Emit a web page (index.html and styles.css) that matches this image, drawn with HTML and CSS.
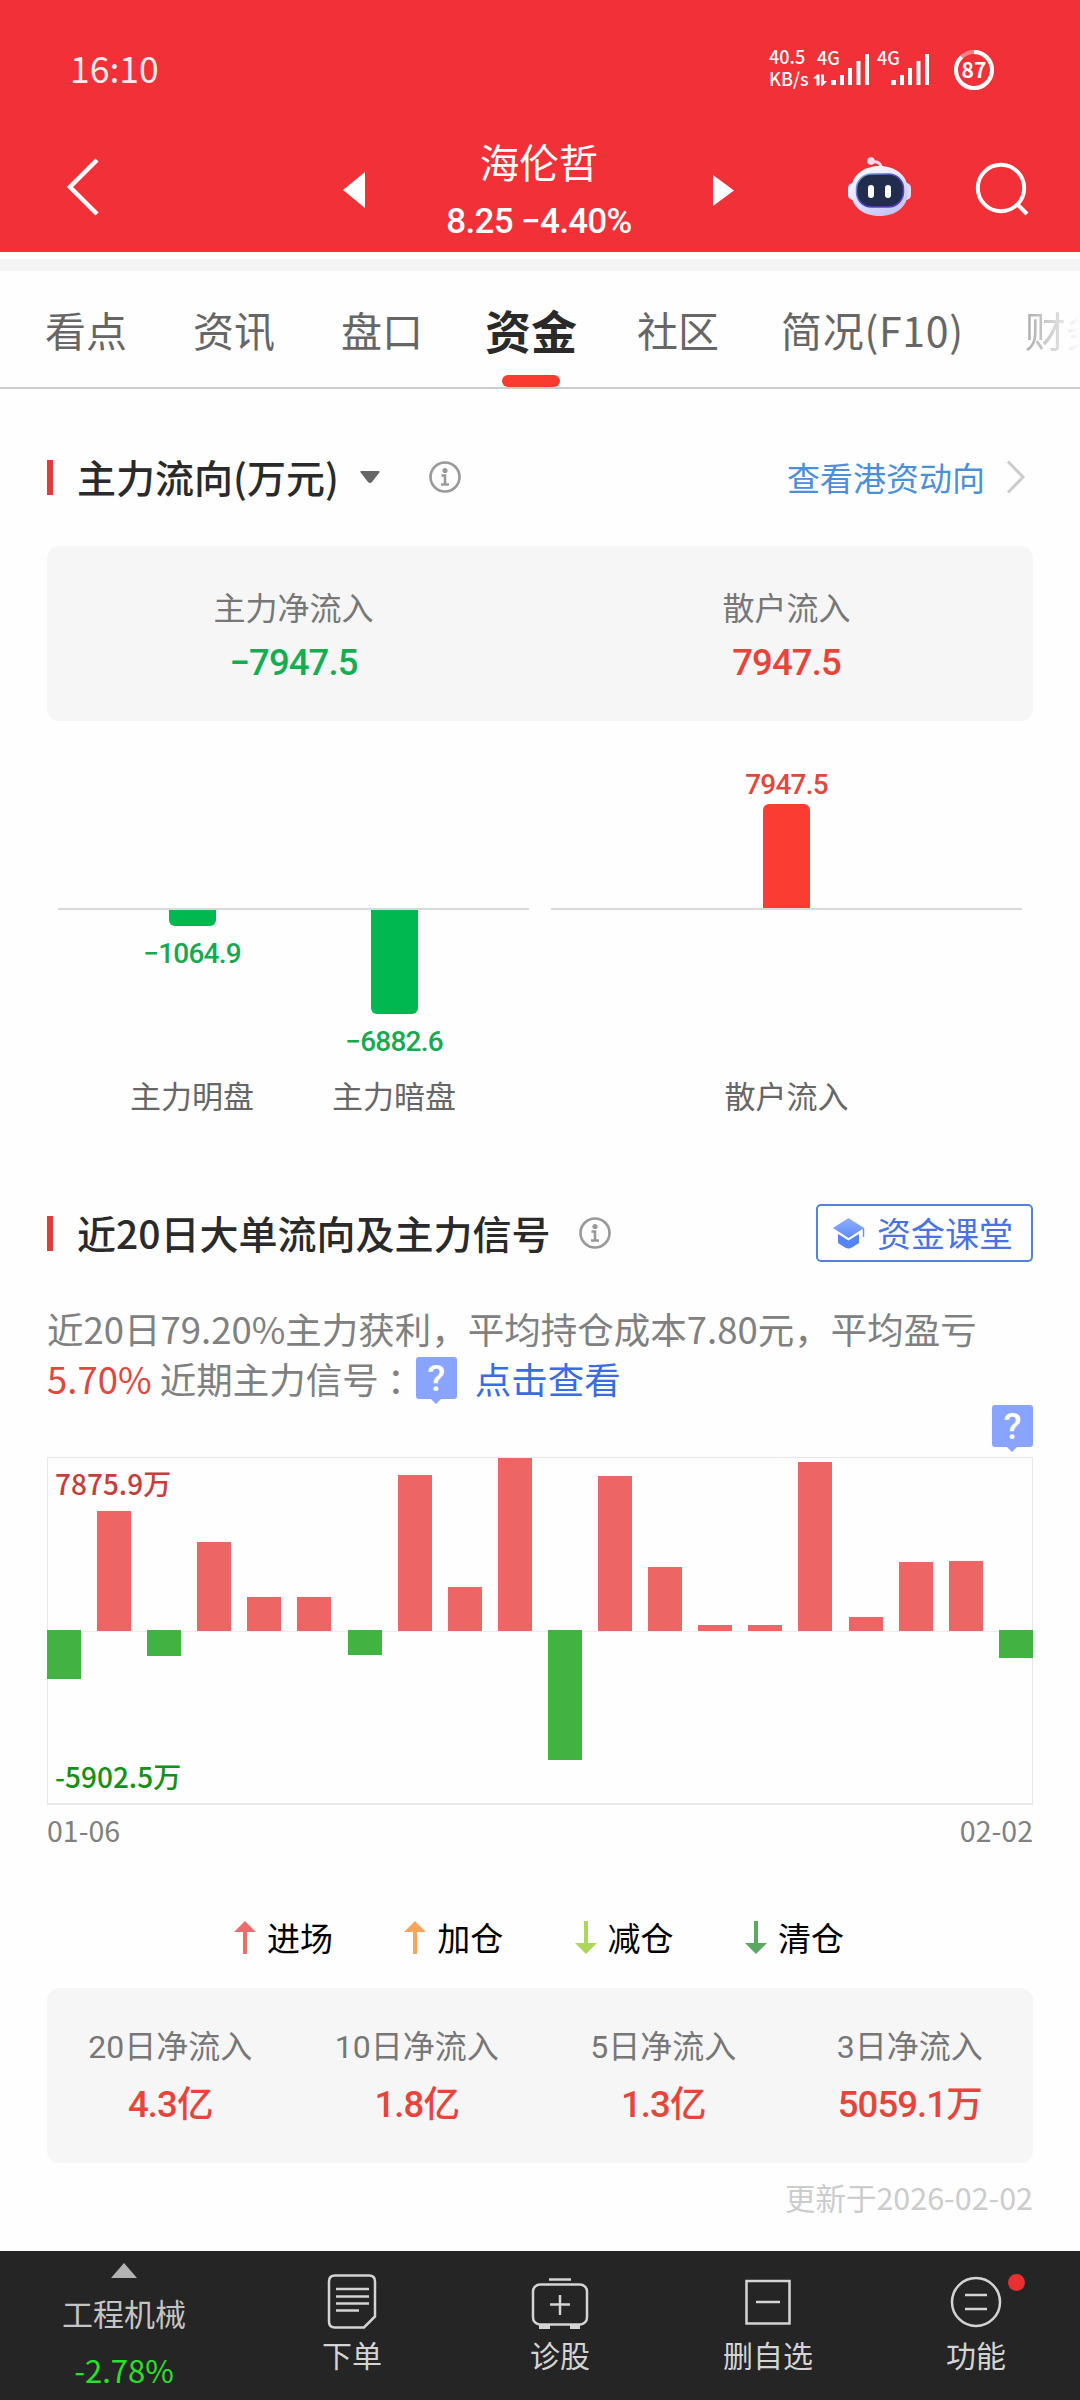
FILE: index.html
```
<!DOCTYPE html>
<html lang="zh-CN">
<head>
  <meta charset="UTF-8" />
  <meta name="viewport" content="width=device-width, initial-scale=1" />
  <title>海伦哲 - 资金</title>
  <link rel="stylesheet" href="styles.css">
</head>
<body>
  <header>
    <div class="status">
      <span class="time">16:10</span>
      <div class="status-right">
        <div class="speed"><span>40.5</span><span>KB/s</span></div>
        <svg class="signal" width="117" height="44" viewBox="0 0 117 44">
          <path d="M0 30.500 4 26.500h2.500v11H3.500v-7zM8 26.500h3v6.500h3l-4.500 5H8z" />
          <path d="M18 32h5v5h-5zM27 27h4v10h-4zM35 20h4v17h-4zM43.500 13h4v24h-4zM52 6h4v31h-4z" />
          <path d="M78 32h5v5h-5zM87 27h4v10h-4zM95 20h4v17h-4zM103.500 13h4v24h-4zM112 6h4v31h-4z" />
          <text x="4" y="17">4G</text>
          <text x="64" y="17">4G</text>
        </svg>
        <svg width="40" height="40" viewBox="0 0 40 40">
          <circle cx="20" cy="20" r="18" fill="none" stroke="#fff" stroke-opacity=".4" stroke-width="4" />
          <circle cx="20" cy="20" r="18" fill="none" stroke="#fff" stroke-width="4" pathLength="100" stroke-dasharray="88 12" transform="rotate(-90 20 20)" />
          <text class="battery" x="20" y="27.500">87</text>
        </svg>
      </div>
    </div>
    <div class="nav">
      <svg class="back" width="36" height="60" viewBox="0 0 36 60"><path d="M32 3 5 30l27 27" fill="none" stroke="#fff" stroke-width="4.500" /></svg>
      <div class="stock">
        <svg width="22" height="36" viewBox="0 0 22 36"><path d="M22 0v36L0 18z" fill="#fff" /></svg>
        <div class="stock-name">
          <h1>海伦哲</h1>
          <p>8.25 −4.40%</p>
        </div>
        <svg width="21" height="31" viewBox="0 0 21 31"><path d="M0 0v31l21-15.500z" fill="#fff" /></svg>
      </div>
      <svg class="robot" width="64" height="60" viewBox="0 0 64 60">
        <defs>
          <linearGradient id="head" x1="0" y1="0" x2=".6" y2="1">
            <stop offset="0" stop-color="#fff" />
            <stop offset=".5" stop-color="#e9e6fb" />
            <stop offset="1" stop-color="#c4c6f8" />
          </linearGradient>
          <linearGradient id="rim" x1="0" y1="0" x2="1" y2="1">
            <stop offset="0" stop-color="#7fb9d8" />
            <stop offset=".5" stop-color="#4a43c8" />
            <stop offset="1" stop-color="#6f35d8" />
          </linearGradient>
        </defs>
        <path d="M33 11c0-5-4-7-9-6" fill="none" stroke="#f5d8ea" stroke-width="3" />
        <circle cx="23" cy="4" r="3.800" fill="#f8dcec" />
        <rect x="0" y="26" width="12" height="17" rx="5" fill="#eeeafd" />
        <rect x="51" y="26" width="12" height="17" rx="5" fill="#dedafb" />
        <path d="M31.500 9C47 9 60 18 60 34S48 59 31.500 59 3 50 3 34 16 9 31.500 9z" fill="url(#head)" />
        <rect x="8.500" y="17" width="47" height="33" rx="15" fill="#222c4d" stroke="url(#rim)" stroke-width="1.500" />
        <rect x="20" y="28" width="6" height="13" rx="3" fill="#fff" />
        <rect x="37" y="28" width="6" height="13" rx="3" fill="#fff" />
      </svg>
      <svg class="search" width="54" height="54" viewBox="0 0 54 54" fill="none" stroke="#fff" stroke-width="4">
        <circle cx="26" cy="26" r="23.200" />
        <path d="m43 43 9 9" />
      </svg>
    </div>
  </header>

  <nav class="tabs">
    <a>看点</a>
    <a>资讯</a>
    <a>盘口</a>
    <a class="active">资金</a>
    <a>社区</a>
    <a class="wide">简况(F10)</a>
    <a class="fade">财务</a>
  </nav>

  <main>
    <section class="flow">
      <div class="section-head">
        <h2>主力流向(万元)</h2>
        <svg class="caret" width="20" height="12" viewBox="0 0 20 12"><path d="M2 0h16q3 0 1 2l-7 9q-2 2-4 0L1 2q-2-2 1-2z" fill="#666" /></svg>
        <svg class="info" width="32" height="32" viewBox="0 0 32 32"><use href="#i-info" /></svg>
        <a class="more">查看港资动向</a>
        <svg width="20" height="34" viewBox="0 0 20 34"><path d="M2 1.500 17 17 2 32.500" fill="none" stroke="#ccc" stroke-width="3" /></svg>
      </div>

      <div class="card two">
        <div><span>主力净流入</span><b class="green">−7947.5</b></div>
        <div><span>散户流入</span><b class="red">7947.5</b></div>
      </div>

      <div class="flow-chart">
        <div class="pane">
          <div class="col">
            <div class="above"></div>
            <div class="below"><i style="height: 16px"></i><em>−1064.9</em></div>
            <span>主力明盘</span>
          </div>
          <div class="col">
            <div class="above"></div>
            <div class="below"><i style="height: 104px"></i><em>−6882.6</em></div>
            <span>主力暗盘</span>
          </div>
        </div>
        <div class="pane">
          <div class="col">
            <div class="above"><em>7947.5</em><i style="height: 104px"></i></div>
            <div class="below"></div>
            <span>散户流入</span>
          </div>
        </div>
      </div>
    </section>

    <section class="signal-section">
      <div class="section-head">
        <h2>近20日大单流向及主力信号</h2>
        <svg class="info" width="32" height="32" viewBox="0 0 32 32"><use href="#i-info" /></svg>
        <a class="class-btn">
          <svg width="34" height="31" viewBox="0 0 34 31">
            <defs><linearGradient id="cap" x1="0" y1="0" x2="0" y2="1"><stop offset="0" stop-color="#8fb0ff" /><stop offset="1" stop-color="#5f8af5" /></linearGradient></defs>
            <path d="M15.500 0 31 10 15.500 20 0 10z" fill="url(#cap)" />
            <path d="M5 16 15.500 22.500 26 16v9l-7 4.500q-3.500 2-7 0L5 25z" fill="#5585f5" />
            <path d="M30.500 10v9" stroke="#6f97f8" stroke-width="1.500" />
          </svg>
          资金课堂
        </a>
      </div>

      <p class="summary">近20日79.20%主力获利，平均持仓成本7.80元，平均盈亏<br><strong>5.70%</strong> 近期主力信号<i class="colon">：</i><span class="badge">?</span><a>点击查看</a></p>

      <div class="badge-row"><span class="badge">?</span></div>

      <div class="bar-chart" id="barChart">
        <label class="max">7875.9万</label>
        <label class="min">-5902.5万</label>
      </div>
      <div class="dates"><span>01-06</span><span>02-02</span></div>

      <div class="legend">
        <span><svg width="22" height="33" viewBox="0 0 22 33" fill="#ee6b6b"><use href="#i-up" /></svg>进场</span>
        <span><svg width="22" height="33" viewBox="0 0 22 33" fill="#f8a55c"><use href="#i-up" /></svg>加仓</span>
        <span><svg width="22" height="33" viewBox="0 0 22 33" fill="#aed65a"><use href="#i-down" /></svg>减仓</span>
        <span><svg width="22" height="33" viewBox="0 0 22 33" fill="#5ba863"><use href="#i-down" /></svg>清仓</span>
      </div>

      <div class="card four">
        <div><span>20日净流入</span><b class="red">4.3亿</b></div>
        <div><span>10日净流入</span><b class="red">1.8亿</b></div>
        <div><span>5日净流入</span><b class="red">1.3亿</b></div>
        <div><span>3日净流入</span><b class="red">5059.1万</b></div>
      </div>
      <p class="updated">更新于2026-02-02</p>
    </section>
  </main>

  <footer>
    <div class="sector">
      <svg width="26" height="15" viewBox="0 0 26 15"><path d="M13 0l13 15H0z" fill="#b3b3b3" /></svg>
      <span>工程机械</span>
      <b>-2.78%</b>
    </div>
    <a>
      <svg width="58" height="58" viewBox="0 0 58 58">
        <path d="M12 4.500h34q6 0 6 6v35L41 56.500H12q-6 0-6-6v-40q0-6 6-6z" />
        <path d="M13 18h33M13 25.500h33M13 32.500h33M13 39.500h23" />
      </svg>
      下单
    </a>
    <a>
      <svg width="58" height="58" viewBox="0 0 58 58">
        <rect x="2" y="13.500" width="54" height="40" rx="7" />
        <path d="M18 8.500h22M29 24v20M19 33.500h20" />
        <path d="M8 56h11M39 56h10" stroke-width="4" />
      </svg>
      诊股
    </a>
    <a>
      <svg width="58" height="58" viewBox="0 0 58 58">
        <rect x="7.500" y="10" width="43" height="42.500" />
        <path d="M17 31h24" />
      </svg>
      删自选
    </a>
    <a class="has-dot">
      <svg width="58" height="58" viewBox="0 0 58 58">
        <circle cx="29" cy="31" r="24" />
        <path d="M18 24h22M18 38h22" />
      </svg>
      功能
    </a>
  </footer>

  <!-- shared icons -->
  <svg class="sprite">
    <symbol id="i-info" viewBox="0 0 32 32">
      <circle cx="16" cy="16" r="14.500" fill="none" stroke="#999" stroke-width="2.600" />
      <circle cx="16" cy="9.500" r="2.600" fill="#999" />
      <path d="M12.500 14.500H16V23M12 23.500h8" fill="none" stroke="#999" stroke-width="2.600" />
    </symbol>
    <symbol id="i-up" viewBox="0 0 22 33"><path d="M11 0l11 11h-9v22H9V11H0z" /></symbol>
    <symbol id="i-down" viewBox="0 0 22 33"><path d="M11 33L0 22h9V0h4v22h9z" /></symbol>
  </svg>

  <script>
    // daily net flow, pixels above / below the zero line
    const flows = [-49.3, 120, -26.3, 89.5, 34.5, 34, -24.7, 156, 44.3, 173.3, -130.3, 155, 64.3, 6.3, 5.7, 169, 13.7, 69, 70.3, -28];
    const chart = document.getElementById('barChart');

    flows.forEach(v => {
      const day = document.createElement('div');
      day.className = v > 0 ? 'day up' : 'day down';
      const bar = document.createElement('i');
      bar.style.height = Math.abs(v) + 'px';
      day.appendChild(bar);
      chart.appendChild(day);
    });
  </script>
</body>
</html>
```
FILE: styles.css
```
* {
  margin: 0;
  padding: 0;
  box-sizing: border-box;
}
body {
  width: 1080px;
  height: 2400px;
  overflow: hidden;
  background: #fefefe;
  color: #666;
  font-family: "Noto Sans CJK SC", sans-serif;
  display: flex;
  flex-direction: column;
}
svg {
  display: block;
  flex: none;
}
i, em {
  font-style: normal;
}
.sprite {
  position: absolute;
  width: 0;
  height: 0;
}
.red { color: #e8443a; }
.green { color: #14ad52; }

/* header */
header {
  height: 252px;
  background: #f13038;
  color: #fff;
}
.status {
  height: 140px;
  padding: 0 86px 0 70px;
  display: flex;
  align-items: center;
  justify-content: space-between;
}
.time {
  margin-top: -4px;
  font-size: 35.500px;
  line-height: 40px;
  color: #ffe9e9;
}
.status-right {
  display: flex;
  align-items: center;
}
.speed {
  width: 44px;
  margin-top: -7px;
  display: flex;
  flex-direction: column;
  font-size: 18px;
  font-weight: 500;
  line-height: 22px;
}
.signal {
  margin-right: 24px;
  fill: #fff;
  overflow: visible;
}
.signal text {
  font-size: 18px;
  font-weight: 500;
}
.battery {
  fill: #fff;
  font-size: 21px;
  font-weight: 700;
  text-anchor: middle;
}
.nav {
  height: 112px;
  padding: 0 52px 0 65px;
  display: flex;
  align-items: flex-start;
}
.back {
  margin-top: 17px;
}
.stock {
  width: 391px;
  margin-left: 242px;
  display: flex;
  align-items: center;
  justify-content: space-between;
}
.stock-name {
  margin-top: -3px;
  text-align: center;
}
.stock svg {
  margin-top: -5px;
}
.stock h1 {
  font-size: 39.500px;
  font-weight: 400;
  line-height: 48px;
}
.stock p {
  margin-top: 14px;
  font-family: Roboto, sans-serif;
  font-size: 35px;
  font-weight: 500;
  line-height: 46px;
  letter-spacing: -.7px;
}
.robot {
  margin: 17px 0 0 114px;
}
.search {
  margin: 22px -1px 0 auto;
}

/* tabs */
.tabs {
  height: 130px;
  margin-top: 7px;
  padding-left: 45px;
  border-top: 12px solid #f4f4f4;
  border-bottom: 2px solid #ccc;
  display: flex;
  overflow: hidden;
  white-space: nowrap;
}
.tabs a {
  margin-right: 66px;
  display: flex;
  flex-direction: column;
  align-items: center;
  font-size: 41px;
  line-height: 116px;
}
.tabs .active {
  position: relative;
  margin: 0 60px 0 -4px;
  color: #2a2a2a;
  font-size: 46px;
  font-weight: 700;
}
.tabs .active::after {
  content: "";
  position: absolute;
  bottom: 0;
  width: 58px;
  height: 12px;
  border-radius: 6px;
  background: #fb3a30;
}
.tabs .wide {
  margin: 0 61px 0 -4px;
  letter-spacing: .7px;
}
.tabs .fade {
  margin: 0;
  background: linear-gradient(90deg, #aaa, #fff 56px);
  -webkit-background-clip: text;
  color: transparent;
}

main {
  height: 1862px;
  padding: 0 47px;
}
.section-head {
  height: 58px;
  display: flex;
  align-items: center;
}
.section-head::before {
  content: "";
  width: 6px;
  height: 35px;
  margin-right: 24px;
  background: #e03c3c;
}
.section-head h2 {
  margin-top: -3px;
  color: #2a2a2a;
  font-size: 39px;
  font-weight: 500;
  line-height: 58px;
}
.flow .section-head {
  margin-top: 59px;
}
.caret {
  margin-left: 21px;
}
.info {
  margin-left: 49px;
}
.more {
  margin: 0 21px 0 auto;
  color: #4a90d9;
  font-size: 33px;
}
.flow .section-head > svg:last-child {
  margin-right: 7px;
}

.card {
  height: 175px;
  border-radius: 12px;
  background: #f6f6f6;
  color: #777;
  display: grid;
  text-align: center;
}
.card div {
  display: flex;
  flex-direction: column;
  padding-top: 36px;
}
.card span {
  font-size: 32px;
  line-height: 48px;
}
.card b {
  font-family: Roboto, "Noto Sans CJK SC", sans-serif;
  font-size: 36.500px;
  font-weight: 500;
  line-height: 50px;
  margin-top: 8px;
  letter-spacing: -.9px;
}
.two {
  margin-top: 40px;
  grid-template-columns: 1fr 1fr;
}
.four {
  margin-top: 26px;
  grid-template-columns: repeat(4, 1fr);
}
.four div {
  padding-top: 35px;
}
.four span {
  font-family: Roboto, "Noto Sans CJK SC", sans-serif;
}
.four b {
  margin-top: 9px;
}

/* main force / retail bars */
.flow-chart {
  margin-top: 37px;
  padding: 0 11px;
  display: flex;
  justify-content: space-between;
}
.pane {
  width: 471px;
  display: flex;
  justify-content: center;
  background: linear-gradient(#d9d9d9, #d9d9d9) 0 150px / 100% 2px no-repeat;
}
.pane:first-child {
  justify-content: flex-start;
  padding-left: 33px;
}
.col {
  width: 202px;
  display: flex;
  flex-direction: column;
  align-items: center;
  font-size: 31px;
}
.above,
.below {
  display: flex;
  flex-direction: column;
  align-items: center;
}
.above {
  height: 150px;
  justify-content: flex-end;
}
.below {
  height: 163px;
  margin-top: 2px;
}
.col i {
  width: 47px;
  background: #00b850;
  border-radius: 0 0 6px 6px;
}
.above i {
  background: #fb3c32;
  border-radius: 6px 6px 0 0;
}
.col em {
  font-family: Roboto, sans-serif;
  font-size: 28px;
  font-weight: 500;
  line-height: 34px;
  letter-spacing: -.8px;
  color: #18a852;
}
.above em {
  margin-bottom: 2px;
  color: #e0483e;
}
.below em {
  margin-top: 11px;
}
.col span {
  line-height: 44px;
  margin-bottom: 2px;
}

/* 20 day signal */
.signal-section .section-head {
  margin-top: 85px;
}
.signal-section .info {
  margin-left: 29px;
}
.class-btn {
  width: 217px;
  height: 58px;
  margin-left: auto;
  padding-left: 15px;
  border: 2px solid #5580e0;
  border-radius: 5px;
  display: flex;
  align-items: center;
  gap: 10px;
  color: #4a72e0;
  font-size: 34px;
  line-height: 50px;
  white-space: nowrap;
}
.summary {
  margin-top: 42px;
  height: 101px;
  color: #808080;
  font-size: 36.500px;
  line-height: 50px;
  white-space: nowrap;
}
.summary strong {
  color: #e0483e;
  font-weight: 400;
}
.summary a {
  margin-left: 18px;
  color: #3a6ce0;
}
.colon {
  display: inline-block;
  width: 37px;
  text-indent: 8px;
}
.badge {
  position: relative;
  display: inline-block;
  width: 41px;
  height: 42px;
  border-radius: 3px;
  background: #88a4ff;
  color: #fff;
  font-family: Roboto, sans-serif;
  font-size: 37px;
  font-weight: 500;
  line-height: 43px;
  text-align: center;
}
.summary .badge {
  vertical-align: 3px;
}
.badge::after {
  content: "";
  position: absolute;
  left: 14px;
  top: 41px;
  border: 6px solid transparent;
  border-top-color: #88a4ff;
  border-bottom: 0;
}
.badge-row {
  height: 52px;
  display: flex;
  justify-content: flex-end;
}
.bar-chart {
  position: relative;
  height: 348px;
  display: flex;
  justify-content: space-between;
  border: 1px solid #e8e8e8;
  border-bottom-width: 2px;
  background: linear-gradient(#eee, #eee) 0 173px / 100% 1px no-repeat;
}
.bar-chart label {
  position: absolute;
  left: 7px;
  font-size: 28px;
  font-weight: 500;
  line-height: 40px;
}
.max {
  top: 5px;
  color: #c83c3c;
}
.min {
  bottom: 7px;
  color: #149014;
}
.day {
  width: 34px;
  display: flex;
}
.day:first-of-type {
  margin-left: -1px;
}
.day:last-of-type {
  margin-right: -1px;
}
.day i {
  width: 100%;
}
.up {
  height: 173px;
  align-items: flex-end;
}
.up i {
  background: #ee6566;
}
.down {
  padding-top: 172px;
  align-items: flex-start;
}
.down i {
  background: #42b342;
}
.dates {
  margin-top: 4px;
  display: flex;
  justify-content: space-between;
  color: #808080;
  font-size: 28.500px;
  line-height: 42px;
}
.legend {
  margin-top: 61px;
  padding-left: 187px;
  height: 50px;
  display: flex;
  align-items: center;
  color: #000;
  font-size: 33px;
  line-height: 46px;
}
.legend span {
  width: 170.300px;
  display: flex;
  align-items: center;
  gap: 11px;
}
.updated {
  margin-top: 11px;
  text-align: right;
  color: #ccc;
  font-size: 30.500px;
  line-height: 46px;
}

/* bottom bar */
footer {
  height: 149px;
  background: #252525;
  display: flex;
  color: #d4d4d4;
}
.sector {
  width: 248px;
  padding-top: 12px;
  display: flex;
  flex-direction: column;
  align-items: center;
  color: #c4c4c4;
  font-size: 31px;
}
.sector span {
  margin-top: 12px;
  line-height: 46px;
}
.sector b {
  margin-top: 11px;
  color: #2be02b;
  font-size: 31px;
  font-weight: 400;
  line-height: 46px;
}
footer a {
  position: relative;
  width: 208px;
  padding-top: 20px;
  display: flex;
  flex-direction: column;
  align-items: center;
  font-size: 30px;
  line-height: 50px;
}
footer a svg {
  fill: none;
  stroke: #d4d4d4;
  stroke-width: 2.500;
}
.has-dot::after {
  content: "";
  position: absolute;
  left: 136px;
  top: 23px;
  width: 17px;
  height: 17px;
  border-radius: 50%;
  background: #e83030;
}
```
